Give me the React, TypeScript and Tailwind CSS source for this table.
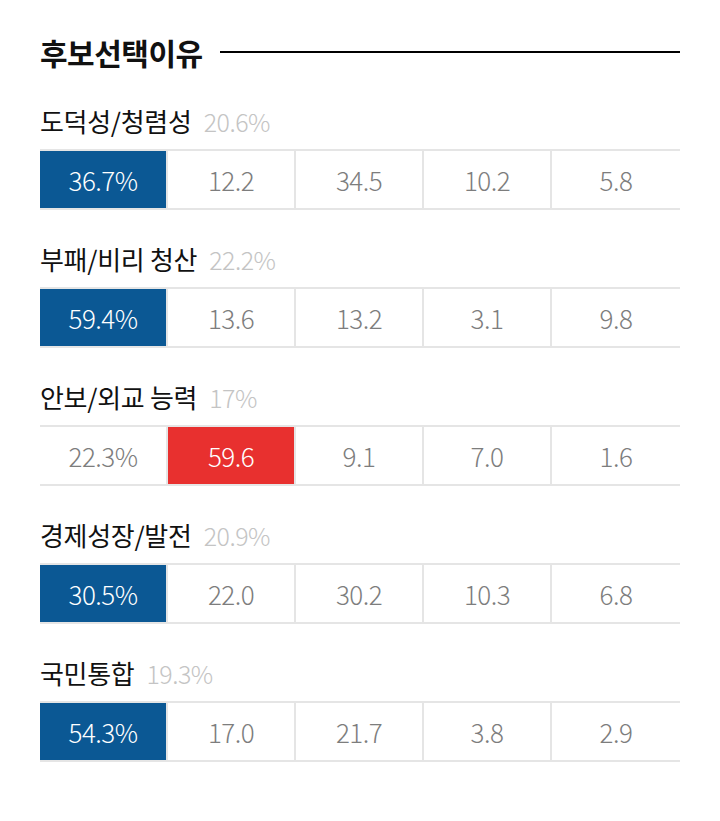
import React from "react";

type Row = {
  label: string;
  share: string;
  values: string[];
  hi: number;
  tone: "blue" | "red";
};

const rows: Row[] = [
  { label: "도덕성/청렴성", share: "20.6%", values: ["36.7%", "12.2", "34.5", "10.2", "5.8"], hi: 0, tone: "blue" },
  { label: "부패/비리 청산", share: "22.2%", values: ["59.4%", "13.6", "13.2", "3.1", "9.8"], hi: 0, tone: "blue" },
  { label: "안보/외교 능력", share: "17%", values: ["22.3%", "59.6", "9.1", "7.0", "1.6"], hi: 1, tone: "red" },
  { label: "경제성장/발전", share: "20.9%", values: ["30.5%", "22.0", "30.2", "10.3", "6.8"], hi: 0, tone: "blue" },
  { label: "국민통합", share: "19.3%", values: ["54.3%", "17.0", "21.7", "3.8", "2.9"], hi: 0, tone: "blue" },
];

const font = { fontFamily: '"Noto Sans CJK KR", "Noto Sans", sans-serif' };

export default function App() {
  return (
    <div className="min-h-[821px] bg-white px-10 pt-[34px]" style={font}>
      {/* Title */}
      <div className="flex h-9 items-center gap-[17px]">
        <h2 className="text-[30px] font-bold leading-9 tracking-[-0.5px] text-[#111]">후보선택이유</h2>
        <div className="h-[2px] flex-1 bg-black" />
      </div>

      {/* Rows */}
      <div className="mt-[36px] flex flex-col gap-[34px]">
        {rows.map((row) => (
          <div key={row.label}>
            <div className="flex h-[30px] items-center gap-[12px]">
              <span className="text-[26px] leading-[30px] tracking-[-0.3px] text-[#111]">{row.label}</span>
              <span className="text-[25px] font-light leading-[30px] tracking-[-0.5px] text-[#c4c4c4]">{row.share}</span>
            </div>
            <div className="mt-[13px] grid h-[61px] grid-cols-5 border-y-2 border-[#e5e5e5]">
              {row.values.map((v, i) => {
                const on = i === row.hi;
                const bg = on ? (row.tone === "blue" ? "bg-[#0b5894] text-white" : "bg-[#e8302f] text-white") : "text-[#7d7d7d]";
                return (
                  <div
                    key={i}
                    className={`flex items-center justify-center text-[26px] font-light tracking-[-0.5px] ${bg} ${i < 4 ? "border-r-2 border-[#e5e5e5]" : ""}`}
                  >
                    {v}
                  </div>
                );
              })}
            </div>
          </div>
        ))}
      </div>
    </div>
  );
}
